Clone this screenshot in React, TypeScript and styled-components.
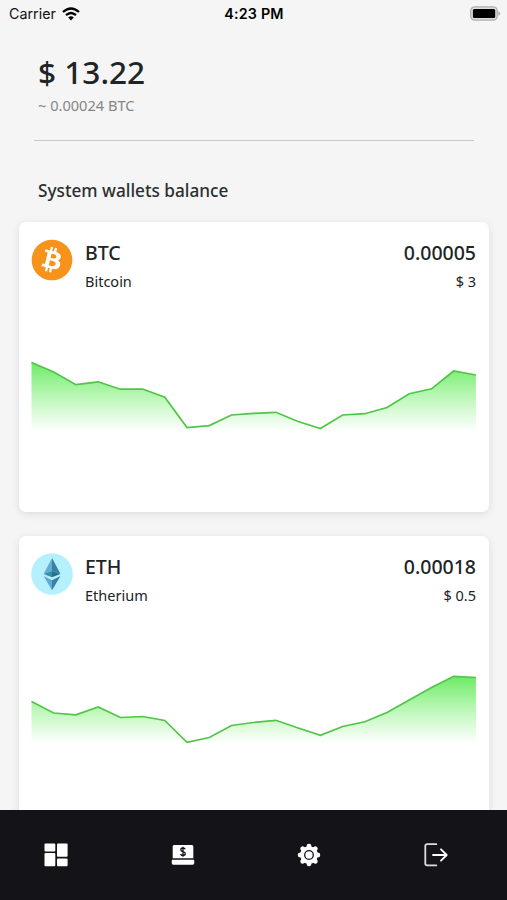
import React from "react";
import styled, { createGlobalStyle } from "styled-components";
import { FaBitcoin } from "react-icons/fa";

const GlobalStyle = createGlobalStyle`
  *, *::before, *::after { box-sizing: border-box; }
  html, body { margin: 0; height: 100%; overflow: hidden; }
  body { background: #f5f5f5; font-family: "Noto Sans", sans-serif; color: #202426; }
  svg { display: block; flex: none; }
`;

const Screen = styled.div`
  height: 900px;
  width: 507px;
  display: flex;
  flex-direction: column;
  overflow: hidden;
  background: #f5f5f5;
`;

const StatusBar = styled.header`
  display: grid;
  grid-template-columns: 1fr auto 1fr;
  align-items: center;
  height: 28px;
  flex: none;
  padding: 0 6px 1px 9px;
  font: 400 14.3px/20px Inter, sans-serif;
  color: #111;
`;

const Carrier = styled.div`
  display: flex;
  align-items: center;
  gap: 6px;
`;

const Clock = styled.div`
  font-weight: 600;
  letter-spacing: 0.2px;
  margin-right: 2px;
  color: #000;
`;

const Battery = styled.div`
  justify-self: end;
`;

const Content = styled.main`
  flex: 1;
  min-height: 0;
  overflow: hidden;
  padding: 0 18px 0 19px;
`;

const Summary = styled.section`
  margin: 0 15px;
  height: 113px;
  padding: 22px 4px 0;
  border-bottom: 1px solid #c9c9c9;
`;

const Total = styled.div`
  font-weight: 500;
  font-size: 31.6px;
  line-height: 44px;
`;

const Equivalent = styled.div`
  font-size: 14.6px;
  line-height: 20px;
  margin-top: 1px;
  color: #858585;
`;

const SectionTitle = styled.h2`
  margin: 38px 0 19px 19px;
  font-size: 17.2px;
  font-weight: 500;
  line-height: 24px;
  color: #2c2f31;
`;

const CardList = styled.div`
  display: flex;
  flex-direction: column;
  gap: 24px;
`;

const Card = styled.article`
  height: 290px;
  flex: none;
  padding: 17px 12px 0;
  background: #fff;
  border-radius: 7px;
  box-shadow: 0 2px 9px rgba(0, 0, 0, 0.1);
`;

const CardHeader = styled.div`
  display: flex;
  height: 60px;
`;

const Labels = styled.div<{ $end?: boolean }>`
  display: flex;
  flex-direction: column;
  text-align: ${(p) => (p.$end ? "right" : "left")};
  margin-left: ${(p) => (p.$end ? "auto" : "12px")};
  padding-right: ${(p) => (p.$end ? "1px" : "0")};
`;

const Primary = styled.div`
  font-size: 19.5px;
  font-weight: 500;
  line-height: 28px;
`;

const Secondary = styled.div`
  font-size: 14.5px;
  line-height: 20px;
  margin-top: 4px;
`;

const NavBar = styled.nav`
  height: 90px;
  flex: none;
  display: grid;
  grid-template-columns: repeat(4, 1fr);
  background: #141318;
`;

const NavButton = styled.button`
  display: flex;
  align-items: center;
  justify-content: center;
  border: 0;
  padding: 0 15px 0 0;
  background: none;
  color: #fff;
`;

const WifiIcon = () => (
  <svg width="18" height="14" viewBox="0 0 18 14" fill="none" stroke="#000" strokeWidth="2.3">
    <path d="M1 5Q9-2.1 17 5M4 8.2Q9 3.8 14 8.2" />
    <path d="M6.2 10.4Q9 8.1 11.8 10.4L9 13.4Z" fill="#000" stroke="none" />
  </svg>
);

const BatteryIcon = () => (
  <svg width="31" height="15" viewBox="0 0 31 15">
    <rect x=".7" y=".8" width="26.5" height="13.3" rx="4" fill="#ddd" stroke="#b0b0b0" strokeWidth="1.3" />
    <rect x="2.9" y="2.9" width="22.3" height="9.2" rx="1.5" fill="#000" />
    <path d="M28.4 5.2Q30.2 6 30.2 7.5T28.4 9.8Z" fill="#aaa" />
  </svg>
);

const EthereumIcon = () => (
  <svg width="42" height="42" viewBox="0 0 42 42">
    <circle cx="21" cy="21" r="20.8" fill="#b5f0ff" />
    <path d="M21 5 12.6 21 21 18Z" fill="#62aed0" />
    <path d="M21 5 29.5 21 21 18Z" fill="#397fa8" />
    <path d="M12.6 21 21 18V24.2Z" fill="#368fa5" />
    <path d="M29.5 21 21 18V24.2Z" fill="#25728d" />
    <path d="M12.6 22.9 21 27.2V37.2Z" fill="#5fa9ce" />
    <path d="M29.5 22.9 21 27.2V37.2Z" fill="#397fa8" />
  </svg>
);

const DashboardIcon = () => (
  <svg width="24" height="24" viewBox="0 0 24 24" fill="currentColor">
    <rect x=".5" y=".5" width="10.8" height="8" rx="1" />
    <rect x=".5" y="10" width="10.8" height="13.3" rx="1" />
    <rect x="13" y=".5" width="10.6" height="13.3" rx="1" />
    <rect x="13" y="15.5" width="10.6" height="7.8" rx="1" />
  </svg>
);

const TerminalIcon = () => (
  <svg width="24" height="22" viewBox="0 0 24 22">
    <path d="M3 1H21Q22.3 1 22.3 2.5V14.3H1.7V2.5Q1.7 1 3 1Z" fill="currentColor" />
    <path d="M1 15.8H23Q24 20.8 21.5 20.8H2.5Q0 20.8 1 15.8Z" fill="currentColor" />
    <path d="M14.2 5.2Q13.6 4 12 4 9.8 4 9.8 5.8 9.8 7.3 12 7.7 14.3 8.1 14.3 9.8T12 11.5Q10 11.5 9.6 10M12 2.8V12.8" fill="none" stroke="#141318" strokeWidth="1.3" />
  </svg>
);

const GearIcon = () => (
  <svg width="24" height="24" viewBox="-12 -12 24 24">
    <g fill="currentColor">
      <circle r="8.8" />
      {[0, 45, 90, 135, 180, 225, 270, 315].map((angle) => (
        <path key={angle} transform={`rotate(${angle})`} d="M-2.8-7.5-1.9-10.4Q-1.5-11.2 0-11.2T1.9-10.4L2.8-7.5Z" />
      ))}
    </g>
    <circle r="4.3" fill="none" stroke="#141318" strokeWidth="1.3" />
  </svg>
);

const LogoutIcon = () => (
  <svg width="24" height="24" viewBox="0 0 24 24" fill="none" stroke="currentColor" strokeLinecap="round" strokeLinejoin="round" strokeWidth="1.8">
    <path d="M12.3 1.2H3.2Q1.3 1.2 1.3 3.1V20.5Q1.3 22.4 3.2 22.4H12.3" stroke="#dedee0" />
    <path d="M9 12H22.5M17 6.3 22.7 12 17 17.7" />
  </svg>
);

const CHART_WIDTH = 445;
const CHART_STEP = 22.22;

interface Wallet {
  symbol: string;
  name: string;
  amount: string;
  value: string;
  icon: React.ReactNode;
  top: number;
  base: number;
  points: number[];
}

const wallets: Wallet[] = [
  {
    symbol: "BTC",
    name: "Bitcoin",
    amount: "0.00005",
    value: "$ 3",
    icon: <FaBitcoin size={42} color="#f7931a" />,
    top: 63,
    base: 133,
    points: [63.5, 73, 85.7, 82.8, 90.2, 90, 98.3, 128.5, 126.6, 116, 114.3, 113.3, 122.5, 129.5, 116, 114.7, 108.5, 94.7, 89.8, 72, 76],
  },
  {
    symbol: "ETH",
    name: "Etherium",
    amount: "0.00018",
    value: "$ 0.5",
    icon: <EthereumIcon />,
    top: 63,
    base: 131,
    points: [88.5, 100, 101.8, 94, 104.5, 103.5, 107.5, 129.3, 124.5, 112.5, 109.5, 107.3, 115, 122.3, 113.5, 108.8, 99.5, 87, 74.5, 63.3, 64.5],
  },
];

function Sparkline({ wallet }: { wallet: Wallet }) {
  const { symbol, points, top, base } = wallet;
  const line = points.map((y, i) => `${(i * CHART_STEP + 0.5).toFixed(1)},${y}`).join(" ");
  const id = `fill-${symbol}`;
  return (
    <svg width={CHART_WIDTH} height="190" viewBox={`0 0 ${CHART_WIDTH} 190`}>
      <defs>
        <linearGradient id={id} gradientUnits="userSpaceOnUse" x1="0" y1={top} x2="0" y2={base}>
          <stop offset="0" stopColor="#63e95b" stopOpacity="0.95" />
          <stop offset="1" stopColor="#7df375" stopOpacity="0" />
        </linearGradient>
      </defs>
      <polygon points={`0.5,${base} ${line} ${CHART_WIDTH},${base}`} fill={`url(#${id})`} />
      <polyline points={line} fill="none" stroke="#50c548" strokeWidth="1.7" />
    </svg>
  );
}

const navItems = [
  { label: "Dashboard", icon: <DashboardIcon /> },
  { label: "Terminal", icon: <TerminalIcon /> },
  { label: "Settings", icon: <GearIcon /> },
  { label: "Log out", icon: <LogoutIcon /> },
];

export default function App() {
  return (
    <Screen>
      <GlobalStyle />
      <StatusBar>
        <Carrier>
          Carrier
          <WifiIcon />
        </Carrier>
        <Clock>4:23 PM</Clock>
        <Battery>
          <BatteryIcon />
        </Battery>
      </StatusBar>
      <Content>
        <Summary>
          <Total>$ 13.22</Total>
          <Equivalent>~ 0.00024 BTC</Equivalent>
        </Summary>
        <SectionTitle>System wallets balance</SectionTitle>
        <CardList>
          {wallets.map((wallet) => (
            <Card key={wallet.symbol}>
              <CardHeader>
                {wallet.icon}
                <Labels>
                  <Primary>{wallet.symbol}</Primary>
                  <Secondary>{wallet.name}</Secondary>
                </Labels>
                <Labels $end>
                  <Primary>{wallet.amount}</Primary>
                  <Secondary>{wallet.value}</Secondary>
                </Labels>
              </CardHeader>
              <Sparkline wallet={wallet} />
            </Card>
          ))}
        </CardList>
      </Content>
      <NavBar>
        {navItems.map((item) => (
          <NavButton key={item.label} aria-label={item.label}>
            {item.icon}
          </NavButton>
        ))}
      </NavBar>
    </Screen>
  );
}
